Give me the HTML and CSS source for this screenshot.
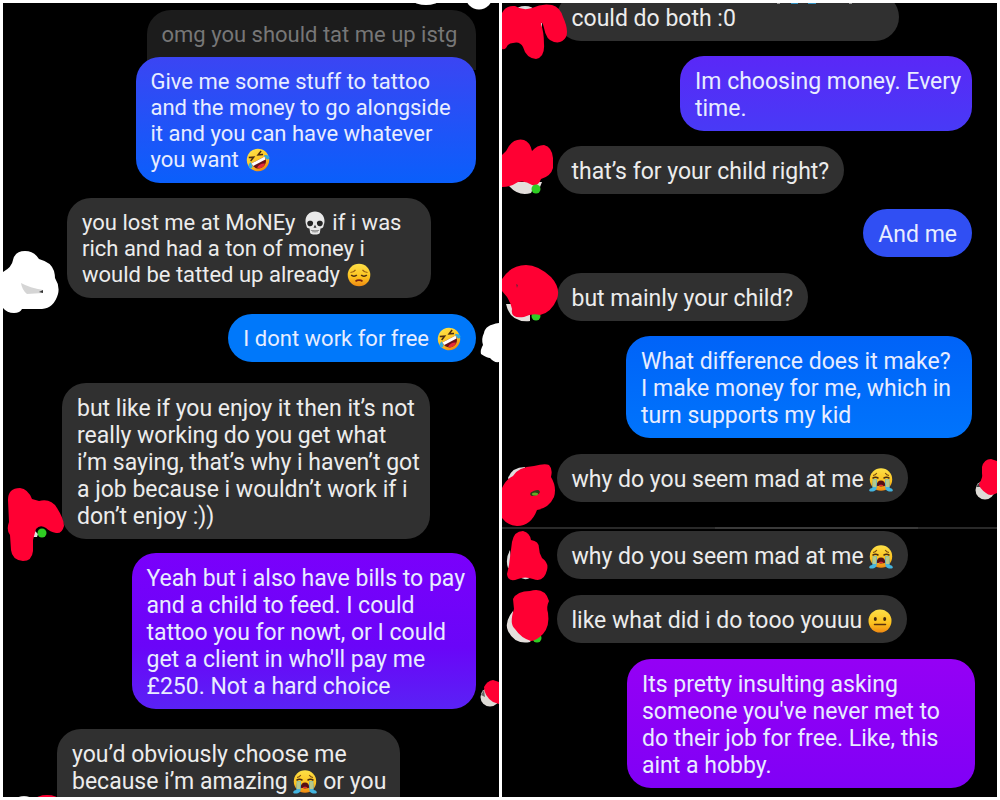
FILE: index.html
```html
<!DOCTYPE html>
<html lang="en">
<head>
<meta charset="utf-8">
<title>Chat conversation</title>
<link rel="stylesheet" href="styles.css">
</head>
<body>
<svg class="defs" aria-hidden="true">
  <defs>
    <linearGradient id="face" x1="0" y1="0" x2="0" y2="1"><stop offset="0" stop-color="#fde047"/><stop offset="0.6" stop-color="#fcc11f"/><stop offset="1" stop-color="#f08a12"/></linearGradient>
    <symbol id="rofl" viewBox="0 0 24 24">
      <g transform="rotate(-28 12 12)">
        <circle cx="12" cy="12" r="11.2" fill="url(#face)"/>
        <path d="M4.500 12h15c.3 5-3 8.500-7.500 8.500S4.200 17 4.500 12z" fill="#6b1118"/>
        <path d="M4.500 12h15l-.6 3H5.100z" fill="#fff"/>
        <path d="M7.500 18.500c2.500-2 6.500-2 9 0-2.400 2.600-6.600 2.600-9 0z" fill="#e62b39"/>
        <path d="M5 5.500l4.500 2L5 9.500M19 5.500l-4.500 2 4.500 2" fill="none" stroke="#4a2c12" stroke-width="1.500"/>
        <path d="M4.500 10.500C2 11 0 13 .6 15c.8 2 3.300 1.500 3.700-.5zM19.500 10.500c2.500.5 4.500 2.500 3.900 4.500-.8 2-3.300 1.500-3.700-.5z" fill="#31a9dc"/>
      </g>
    </symbol>
    <symbol id="skull" viewBox="0 0 24 24">
      <path d="M12 .5C6.500.5 2.500 4.500 2.500 10c0 2.500.8 3.600 1 5 .2 1.500 1 2.500 3 2.600l.6 4c.2 1.500 2 2 4.900 2s4.700-.5 4.900-2l.6-4c2-.1 2.800-1.100 3-2.600.2-1.400 1-2.500 1-5C21.500 4.500 17.500.5 12 .5z" fill="#e9e9e9"/>
      <path d="M4.500 11c1-2 5.300-1.700 5.600.6.200 2.400-1 3.700-3 3.700s-3.500-2-2.600-4.300zM19.500 11c-1-2-5.300-1.700-5.600.6-.2 2.400 1 3.700 3 3.700s3.500-2 2.600-4.300z" fill="#252525"/>
      <path d="M12 13.800l1.500 2.900h-3z" fill="#333"/>
      <path d="M7.800 19.300c2.800.9 5.600.9 8.400 0M10 19v2.500M12 19.200v2.600M14 19v2.500" fill="none" stroke="#777" stroke-width=".8"/>
    </symbol>
    <symbol id="pensive" viewBox="0 0 24 24">
      <circle cx="12" cy="12" r="11.300" fill="url(#face)"/>
      <path d="M3.500 9.500c2-.2 4-1.200 5-2.700M20.500 9.500c-2-.2-4-1.200-5-2.700" fill="none" stroke="#9a5e11" stroke-width="1.200"/>
      <path d="M4.200 12c1.500 1.500 4 1.500 5.600 0M14.200 12c1.500 1.500 4 1.500 5.600 0" fill="none" stroke="#4a2c12" stroke-width="1.700"/>
      <path d="M8.500 18.300c1.800-1.500 5.200-1.500 7 0" fill="none" stroke="#7b210f" stroke-width="1.700"/>
    </symbol>
    <symbol id="sob" viewBox="0 0 24 24">
      <circle cx="12" cy="11.500" r="11.200" fill="url(#face)"/>
      <path d="M4 7.500c1.500-.2 3-1.200 3.800-2.600M20 7.500c-1.500-.2-3-1.200-3.800-2.600" fill="none" stroke="#7d4d12" stroke-width="1.100"/>
      <path d="M3.500 10.300c1.800-1.300 4.200-1.300 6 0M14.500 10.300c1.800-1.300 4.200-1.300 6 0" fill="none" stroke="#4a2c12" stroke-width="1.600"/>
      <path d="M3.800 11.300h4c.2 4 .2 7-.4 10C6 24 1.500 24 .3 23c-.4-1.800.8-2.800 3-3zM20.200 11.300h-4c-.2 4-.2 7 .4 10C18 24 22.500 24 23.700 23c.4-1.800-.8-2.800-3-3z" fill="#45b5df"/>
      <path d="M4.100 11.500h3.300l-.3 7.500H4zM19.900 11.500h-3.300l.3 7.500H20z" fill="#b9c98a"/>
      <path d="M7.800 17.500c0-3.200 1.700-5 4.200-5s4.200 1.800 4.200 5c-1.300 1.200-7.100 1.200-8.400 0z" fill="#541016"/>
      <path d="M9.300 17.800c1-1.500 4.400-1.500 5.400 0-1.500.6-3.900.6-5.400 0z" fill="#df3038"/>
    </symbol>
    <symbol id="neutral" viewBox="0 0 24 24">
      <circle cx="12" cy="12" r="11.500" fill="url(#face)"/>
      <ellipse cx="7.300" cy="10" rx="1.500" ry="1.900" fill="#42280f"/>
      <ellipse cx="16.700" cy="10" rx="1.500" ry="1.900" fill="#42280f"/>
      <path d="M6.500 15.500h11" stroke="#5a300d" stroke-width="1.500" stroke-linecap="round"/>
    </symbol>
  </defs>
</svg>

<main class="collage">
  <section class="pane pane-first" aria-label="First part of the conversation">
    <p class="bubble quoted">omg you should tat me up istg</p>
    <p class="bubble sent tight blue-fade">Give me some stuff to tattoo<br>and the money to go alongside<br>it and you can have whatever<br>you want <svg class="emoji" role="img" aria-label="rolling on the floor laughing"><use href="#rofl"/></svg></p>
    <p class="bubble received tight lost">you lost me at MoNEy <svg class="emoji" role="img" aria-label="skull"><use href="#skull"/></svg> if i was<br>rich and had a ton of money i<br>would be tatted up already <svg class="emoji" role="img" aria-label="pensive"><use href="#pensive"/></svg></p>
    <p class="bubble sent bright">I dont work for free <svg class="emoji" role="img" aria-label="rolling on the floor laughing"><use href="#rofl"/></svg></p>
    <p class="bubble received enjoy">but like if you enjoy it then it’s not<br>really working do you get what<br>i’m saying, that’s why i haven’t got<br>a job because i wouldn’t work if i<br>don’t enjoy :))</p>
    <p class="bubble sent violet-fade">Yeah but i also have bills to pay<br>and a child to feed. I could<br>tattoo you for nowt, or I could<br>get a client in who'll pay me<br>£250. Not a hard choice</p>
    <p class="bubble received amazing">you’d obviously choose me<br>because i’m amazing <svg class="emoji" role="img" aria-label="loudly crying"><use href="#sob"/></svg> or you</p>

    <svg class="marks marks-left" width="70" height="794" viewBox="3 3 70 794" aria-hidden="true">
      <path fill="#fff" d="M3 272Q12 267 13 260Q15 251 25 251Q34 251 39 259Q51 262 54 271Q55 275 55 278Q60 286 58 294Q54 308 42 309L22 309Q20 313 14 313Q7 313 3 308Z"/>
      <path fill="#d5d5d5" d="M21 283Q30 288 43 290L43 293L27 294Q22 290 21 283Z"/>
      <path fill="#333" d="M39 292L43 290L43 293Z"/>
      <path fill="#e8e3e3" d="M34 530l4 4-1 3h-4z"/>
      <path fill="#f03" d="M8 500Q8 488 20 488Q28 489 32 499L39 501Q51 498 57 508Q64 519 64 526Q62 534 56 533Q50 532 46 528Q40 524 36 529L33 540V551Q32 561 23 561Q12 560 11 550L10 535Q6 530 9 522Z"/>
      <circle cx="42" cy="533" r="4.500" fill="#2fce23"/>
      <ellipse cx="24" cy="800" rx="8" ry="4" fill="#ddd"/>
      <ellipse cx="47" cy="800" rx="12" ry="5" fill="#f03"/>
    </svg>
    <svg class="marks marks-right" width="89" height="794" viewBox="410 3 89 794" aria-hidden="true">
      <ellipse cx="426" cy="1" rx="12" ry="4" fill="#fff"/>
      <circle cx="479" cy="-4" r="13.500" fill="#fff"/>
      <path fill="#fff" d="M499 323Q485 325 484 333Q481 339 483 345Q480 350 481 354Q487 358 490 358Q494 363 499 362Z"/>
      <circle cx="490" cy="697" r="9.500" fill="#dedbd6"/>
      <path fill="#666" d="M481 695l3-5 1 7z"/>
      <path fill="#f03" d="M484 687Q487 681 493 680L499 682V704L493 702Q484 696 484 687Z"/>
    </svg>
  </section>

  <section class="pane pane-second" aria-label="Second part of the conversation">
    <p class="bubble received both">could do both :0</p>
    <p class="bubble sent indigo">Im choosing money. Every<br>time.</p>
    <p class="bubble received">that’s for your child right?</p>
    <p class="bubble sent royal">And me</p>
    <p class="bubble received">but mainly your child?</p>
    <p class="bubble sent azure">What difference does it make?<br>I make money for me, which in<br>turn supports my kid</p>
    <p class="bubble received">why do you seem mad at me <svg class="emoji" role="img" aria-label="loudly crying"><use href="#sob"/></svg></p>
    <div class="seam"><span class="seam-edge"></span></div>
    <p class="bubble received spaced">why do you seem mad at me <svg class="emoji" role="img" aria-label="loudly crying"><use href="#sob"/></svg></p>
    <p class="bubble received spaced">like what did i do tooo youuu <svg class="emoji" role="img" aria-label="neutral"><use href="#neutral"/></svg></p>
    <p class="bubble sent purple">Its pretty insulting asking<br>someone you've never met to<br>do their job for free. Like, this<br>aint a hobby.</p>

    <svg class="marks marks-left" width="68" height="794" viewBox="502 3 68 794" aria-hidden="true">
      <ellipse cx="525" cy="10" rx="9" ry="4" fill="#ddd"/>
      <path fill="#ddd" d="M538 23h4v7l-4-3z"/>
      <path fill="#f03" d="M502 13Q506 5 515 6Q523 11 532 8Q542 3 552 5Q560 7 563 17Q569 30 566 37Q562 44 554 42Q546 40 544 28Q542 20 541 24Q544 32 544 44Q545 57 536 59Q526 58 523 47Q520 41 513 43Q508 43 506 48Q504 50 502 49Z"/>
      <path fill="#e4dfdc" d="M509 182h33l-2 5q-4-2-7 2l-2 4q-12 4-22-7z"/>
      <path fill="#f03" d="M502 155Q507 151 509 146Q515 138 524 140Q530 142 532 151Q537 145 544 145Q552 147 553 158V168Q551 176 541 179Q538 187 532 185Q525 180 518 182Q511 187 502 187Z"/>
      <circle cx="536" cy="189" r="4.500" fill="#2fce23"/>
      <path fill="#e4dfdc" d="M506 304h10l14 11v6q-20 2-24-17z"/>
      <circle cx="536" cy="316" r="4.500" fill="#2fce23"/>
      <path fill="#f03" d="M502 279Q511 265 526 265Q538 265 551 277Q561 288 557 299Q551 313 540 315Q532 313 524 317Q510 319 512 309Q510 299 502 291Z"/>
      <path fill="#742239" d="M516 284l2 1-1 3z"/>
      <path fill="#ddd" d="M508 478Q512 467 525 467V475L510 482Z"/>
      <path fill="#f03" d="M502 488Q506 479 513 476Q518 467 534 466Q545 463 549 465Q553 469 551 477Q557 487 554 497Q549 508 537 510Q531 526 517 526Q508 526 502 518Z"/>
      <ellipse cx="535" cy="493" rx="5" ry="2.500" fill="#303b16" transform="rotate(-20 535 493)"/>
      <ellipse cx="535" cy="494" rx="3" ry="1.500" fill="#64ac24"/>
      <path fill="#ddd" d="M510 550l2 17-4 1q-3-9 2-18zM518 575h15q-7 8-15 1z"/>
      <path fill="#f03" d="M512 542Q514 531 523 531Q530 533 531 540Q539 541 539 548Q539 553 542 558Q549 563 547 570Q544 583 533 579Q525 576 518 579Q508 583 507 574Q508 570 509 565Z"/>
      <path fill="#e4dfdc" d="M513 611Q504 622 508 631Q515 645 530 642L534 636L514 619Z"/>
      <circle cx="537" cy="638" r="4.500" fill="#2fce23"/>
      <path fill="#f03" d="M513 599Q517 591 530 591Q545 587 549 601Q546 607 548 613Q550 626 543 634Q536 641 531 641Q521 638 515 629Q509 624 514 609Z"/>
    </svg>
    <svg class="marks marks-right" width="28" height="794" viewBox="970 3 28 794" aria-hidden="true">
      <circle cx="986" cy="490" r="9.500" fill="#dedbd6"/>
      <path fill="#444" d="M977 487l4-5 1 5z"/>
      <path fill="#f03" d="M983 467Q985 459 992 459L998 461V493Q991 497 987 493Q980 488 980 484Q984 478 983 473Z"/>
    </svg>
    <svg class="marks marks-top" width="80" height="3" viewBox="772 3 80 3" aria-hidden="true">
      <path d="M777 3h3v1h-3zM849 3h3v1h-3z" fill="#999"/>
      <path d="M791 3h7v1h-7zM808 3h8v1h-8z" fill="#2e8fc0"/>
    </svg>
  </section>
</main>
</body>
</html>
```
FILE: styles.css
```css
* {
  box-sizing: border-box;
}

body {
  margin: 0;
  background: #fff;
  font-family: Roboto, "Liberation Sans", sans-serif;
}

.defs {
  position: absolute;
  width: 0;
  height: 0;
}

.collage {
  display: grid;
  grid-template-columns: 1fr 1fr;
  gap: 3px;
  height: 100vh;
  padding: 3px;
}

.pane {
  position: relative;
  display: flex;
  flex-direction: column;
  align-items: flex-start;
  overflow: hidden;
  background: #000;
}

.pane-first {
  padding: 7px 23px 0 59px;
}

.pane-second {
  gap: 15px;
  padding: 0 25px 0 55px;
}

.bubble {
  flex: none;
  margin: 0;
  padding: 12px 15px 9px;
  border-radius: 24px;
  color: #ececec;
  font-size: 23px;
  line-height: 27px;
  white-space: nowrap;
}

.tight {
  padding: 12px 15px 10px;
  font-size: 22px;
  line-height: 26px;
}

.received {
  background: #303030;
}

.sent {
  align-self: flex-end;
  color: #e8edff;
}

/* runs on behind the reply's rounded top corners */
.quoted {
  align-self: flex-end;
  width: 329px;
  padding: 11px 15px 22px;
  border-radius: 24px 24px 0 0;
  background: #1c1c1c;
  color: #777;
  font-size: 22px;
}

.blue-fade {
  width: 340px;
  margin-top: -13px;
  background: linear-gradient(#3b45f3, #0a5ffb);
}

.lost {
  width: 364px;
  margin: 15px 0 16px 5px;
}

.bright {
  padding: 11px 15px 10px;
  background: #0078fa;
  font-size: 22px;
}

.tight .emoji,
.bright .emoji {
  margin-left: 2px;
}

.enjoy {
  width: 368px;
  margin: 21px 0 14px;
}

.violet-fade {
  width: 344px;
  background: linear-gradient(#7a00fb, #6a05f8 60%, #5a22f5);
}

/* carries on past the bottom of the pane */
.amazing {
  width: 343px;
  margin: 20px 0 0 -5px;
  padding-bottom: 36px;
}

.both {
  width: 342px;
  margin-top: -10px;
}

.indigo {
  width: 292px;
  background: linear-gradient(#5a28f7, #483af6);
}

.royal {
  margin-bottom: 1px;
  background: #304ff3;
}

.azure {
  width: 346px;
  margin-bottom: 1px;
  background: linear-gradient(#0063f8, #0074fc);
}

.spaced {
  margin-bottom: 1px;
}

.purple {
  width: 348px;
  margin-right: -3px;
  background: linear-gradient(#9500f5, #8000f6);
}

.seam {
  align-self: stretch;
  height: 2px;
  margin: 10px -25px -13px -55px;
  background: #292929;
}

.seam-edge {
  display: block;
  width: 41%;
  height: 2px;
  margin-left: 43%;
  background: #3a3a3a;
}

.emoji {
  width: 24px;
  height: 24px;
  margin: -4px 0;
  vertical-align: -1px;
}

.marks {
  position: absolute;
  top: 0;
}

.marks-left {
  left: 0;
}

.marks-right {
  right: 0;
}

.marks-top {
  left: 270px;
}
```
